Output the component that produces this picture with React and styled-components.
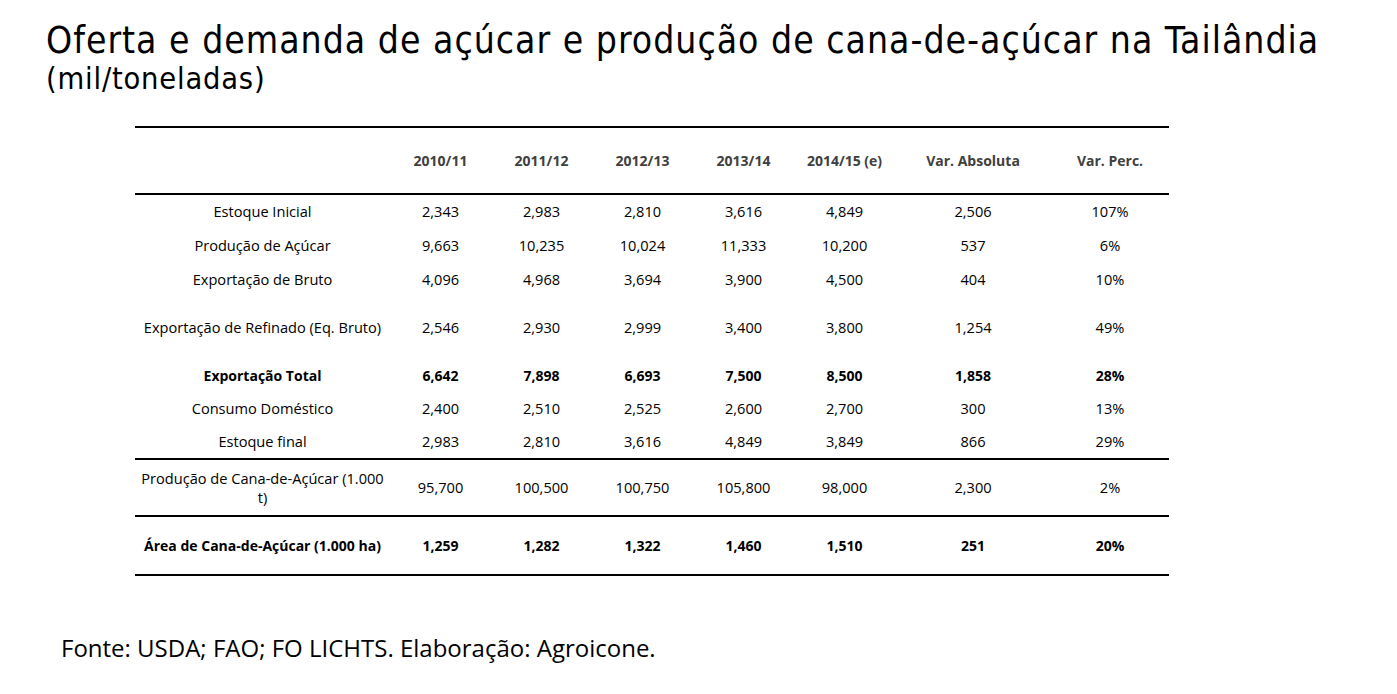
import React from "react";
import styled, { createGlobalStyle } from "styled-components";

const Global = createGlobalStyle`
  html, body { margin: 0; padding: 0; background: #fff; }
  body { width: 1397px; height: 694px; overflow: hidden; }
`;

const Page = styled.div`
  width: 1397px;
  height: 694px;
  box-sizing: border-box;
  padding: 23px 0 0 46px;
  display: flex;
  flex-direction: column;
  color: #000;
`;

const Title = styled.h1`
  margin: 0;
  font-family: "DejaVu Sans Condensed", "DejaVu Sans", Tahoma, sans-serif;
  font-stretch: condensed;
  font-weight: normal;
  font-size: 37px;
  line-height: 36px;
  letter-spacing: 1px;
  white-space: nowrap;
`;

const Subtitle = styled.div`
  margin-top: 3px;
  font-family: "DejaVu Sans Condensed", "DejaVu Sans", Tahoma, sans-serif;
  font-stretch: condensed;
  font-size: 30.5px;
  line-height: 34px;
  letter-spacing: 0.8px;
`;

const Table = styled.table`
  margin: 30px 0 0 89px;
  width: 1034px;
  border-collapse: collapse;
  table-layout: fixed;
  font-family: "Open Sans", "Liberation Sans", sans-serif;
  border-top: 2px solid #000;
  border-bottom: 2px solid #000;
`;

const HeadCell = styled.th`
  height: 65px;
  padding: 0;
  font-size: 14px;
  font-weight: bold;
  color: #404040;
  text-align: center;
  vertical-align: middle;
  border-bottom: 2px solid #000;
`;

const Row = styled.tr`
  height: ${(p) => p.$h}px;
  font-weight: ${(p) => (p.$bold ? "bold" : "normal")};
  font-size: ${(p) => (p.$bold ? "14px" : "14.6px")};
  border-bottom: ${(p) => (p.$rule ? "2px solid #000" : "none")};
`;

const Cell = styled.td`
  padding: 0 ${(p) => (p.$label ? "4px" : "0")};
  text-align: center;
  vertical-align: middle;
  line-height: 19px;
`;

const Footer = styled.div`
  margin: 56px 0 0 15px;
  font-family: "Open Sans", "Liberation Sans", sans-serif;
  font-size: 24px;
  line-height: 32px;
`;

const cols = [
  { label: "", w: 255 },
  { label: "2010/11", w: 101 },
  { label: "2011/12", w: 101 },
  { label: "2012/13", w: 101 },
  { label: "2013/14", w: 101 },
  { label: "2014/15 (e)", w: 101 },
  { label: "Var. Absoluta", w: 156 },
  { label: "Var. Perc.", w: 118 },
];

const rows = [
  { name: "Estoque Inicial", v: ["2,343", "2,983", "2,810", "3,616", "4,849", "2,506", "107%"], h: 34 },
  { name: "Produção de Açúcar", v: ["9,663", "10,235", "10,024", "11,333", "10,200", "537", "6%"], h: 34 },
  { name: "Exportação de Bruto", v: ["4,096", "4,968", "3,694", "3,900", "4,500", "404", "10%"], h: 34 },
  { name: "Exportação de Refinado (Eq. Bruto)", v: ["2,546", "2,930", "2,999", "3,400", "3,800", "1,254", "49%"], h: 62 },
  { name: "Exportação Total", v: ["6,642", "7,898", "6,693", "7,500", "8,500", "1,858", "28%"], h: 34, bold: true },
  { name: "Consumo Doméstico", v: ["2,400", "2,510", "2,525", "2,600", "2,700", "300", "13%"], h: 33 },
  { name: "Estoque final", v: ["2,983", "2,810", "3,616", "4,849", "3,849", "866", "29%"], h: 34, rule: true },
  { name: "Produção de Cana-de-Açúcar (1.000 t)", v: ["95,700", "100,500", "100,750", "105,800", "98,000", "2,300", "2%"], h: 57, rule: true },
  { name: "Área de Cana-de-Açúcar (1.000 ha)", v: ["1,259", "1,282", "1,322", "1,460", "1,510", "251", "20%"], h: 59, bold: true },
];

export default function App() {
  return (
    <Page>
      <Global />
      <Title>Oferta e demanda de açúcar e produção de cana-de-açúcar na Tailândia</Title>
      <Subtitle>(mil/toneladas)</Subtitle>
      <Table>
        <colgroup>
          {cols.map((c, i) => (
            <col key={i} style={{ width: c.w }} />
          ))}
        </colgroup>
        <thead>
          <tr>
            {cols.map((c, i) => (
              <HeadCell key={i}>{c.label}</HeadCell>
            ))}
          </tr>
        </thead>
        <tbody>
          {rows.map((r) => (
            <Row key={r.name} $h={r.h} $bold={r.bold} $rule={r.rule}>
              <Cell $label>{r.name}</Cell>
              {r.v.map((x, i) => (
                <Cell key={i}>{x}</Cell>
              ))}
            </Row>
          ))}
        </tbody>
      </Table>
      <Footer>Fonte: USDA; FAO; FO LICHTS. Elaboração: Agroicone.</Footer>
    </Page>
  );
}
